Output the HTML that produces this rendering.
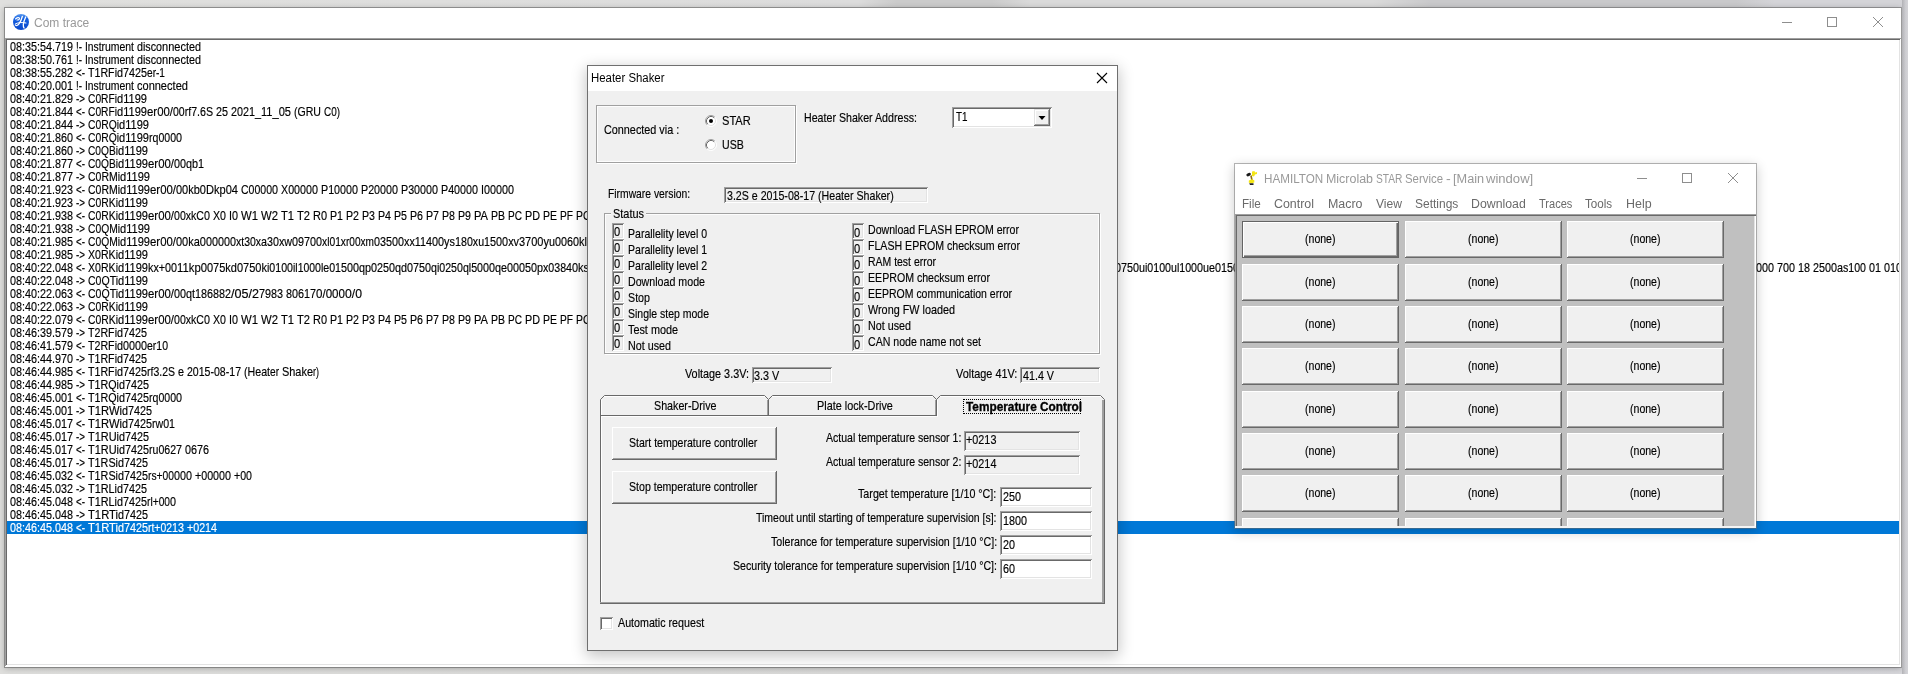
<!DOCTYPE html><html><head><meta charset='utf-8'><title>Com trace</title><style>html,body{margin:0;padding:0}body{width:1908px;height:674px;overflow:hidden;position:relative;background:linear-gradient(90deg,#dededc,#d9d9d8 45%,#d2d2d5 80%,#d6d6da);font-family:"Liberation Sans",sans-serif}
#root{position:absolute;left:0;top:0;width:1908px;height:674px;overflow:hidden;will-change:transform}
.a{position:absolute;box-sizing:border-box}
.t{position:absolute;white-space:pre;transform-origin:0 0;font-family:"Liberation Sans",sans-serif;-webkit-text-stroke:0.17px currentColor}</style></head><body><div id='root'><div class='a ' style='left:0px;top:0px;width:1908px;height:7px;background:linear-gradient(90deg,#e0e0de 0,#dcdcdc 45%,#cbcbcb 47%,#cbcbcb 52%,#dadada 54%,#dadada 72%,#c9c9cb 75%,#c9c9cb 91%,#d4d4d8 93%)'></div><div class='a ' style='left:5px;top:8px;width:1896px;height:659px;background:#fff;border:0;box-shadow:0 0 0 1px rgba(100,100,100,.6),0 1px 6px 0 rgba(0,0,0,.3)'></div><svg class=a style="left:13px;top:14px" width="16" height="16" viewBox="0 0 16 16"><defs><linearGradient id="cg" x1="0" y1="0" x2="0" y2="1"><stop offset="0" stop-color="#5b9bf0"/><stop offset=".3" stop-color="#1560e0"/><stop offset="1" stop-color="#0a48cc"/></linearGradient></defs><circle cx="8" cy="8" r="8" fill="url(#cg)"/><g stroke="#fff" fill="none" stroke-linecap="round"><path d="M2.500 5c1.500-1.500 3.500-1.800 4-.8s-1 2-2.500 1.800" stroke-width="1.100"/><path d="M9.300 2.500C8.500 5.500 7.500 8 6 9.800S3 12 2.300 11" stroke-width="1.300"/><path d="M12.700 3c-1.200 2.500-2.300 5-2.400 7.500s.5 3 .8 3.500" stroke-width="1.300"/><path d="M2.500 9.800c2.500-1.200 6-1.800 10.500-.8" stroke-width="1"/></g></svg><span class=t style='left:34.2px;top:16.84px;font-size:12px;line-height:12px;color:#999;-webkit-text-stroke:0;transform:scaleX(0.9989);'>Com trace</span><svg class=a style="left:1776px;top:12px" width="116" height="20" viewBox="0 0 116 20"><g stroke="#8e8e8e" stroke-width="1" fill="none"><path d="M6 10.500h10"/><rect x="51.500" y="5.500" width="9" height="9"/><path d="M97 5l10 10M107 5l-10 10"/></g></svg><div class='a ' style='left:5px;top:38px;width:1896px;height:628px;background:#fff;box-shadow:inset 1px 1px 0 #a0a0a0,inset -1px -1px 0 #fff,inset 2px 2px 0 #696969,inset -2px -2px 0 #e3e3e3'></div><div class='a ' style='left:7px;top:521px;width:1892px;height:13px;background:#0078d7'></div><span class=t style='left:9.5px;top:40.00px;font-size:13px;line-height:13px;color:#000;transform:scaleX(0.8296);'>08:35</span><span class=t style='left:36.5px;top:40.00px;font-size:13px;line-height:13px;color:#000;transform:scaleX(0.8298);'>:54.7</span><span class=t style='left:60.5px;top:40.00px;font-size:13px;line-height:13px;color:#000;transform:scaleX(0.8294);'>19</span><span class=t style='left:75.5px;top:40.00px;font-size:13px;line-height:13px;color:#000;transform:scaleX(0.7544);'>!-</span><span class=t style='left:84.5px;top:40.00px;font-size:13px;line-height:13px;color:#000;transform:scaleX(0.7906);'>Instr</span><span class=t style='left:104.5px;top:40.00px;font-size:13px;line-height:13px;color:#000;transform:scaleX(0.8024);'>ument</span><span class=t style='left:136.5px;top:40.00px;font-size:13px;line-height:13px;color:#000;transform:scaleX(0.8235);'>disco</span><span class=t style='left:161.5px;top:40.00px;font-size:13px;line-height:13px;color:#000;transform:scaleX(0.8487);'>nnect</span><span class=t style='left:188.5px;top:40.00px;font-size:13px;line-height:13px;color:#000;transform:scaleX(0.8294);'>ed</span><span class=t style='left:9.5px;top:53.00px;font-size:13px;line-height:13px;color:#000;transform:scaleX(0.8296);'>08:38</span><span class=t style='left:36.5px;top:53.00px;font-size:13px;line-height:13px;color:#000;transform:scaleX(0.8298);'>:50.7</span><span class=t style='left:60.5px;top:53.00px;font-size:13px;line-height:13px;color:#000;transform:scaleX(0.8294);'>61</span><span class=t style='left:75.5px;top:53.00px;font-size:13px;line-height:13px;color:#000;transform:scaleX(0.7544);'>!-</span><span class=t style='left:84.5px;top:53.00px;font-size:13px;line-height:13px;color:#000;transform:scaleX(0.7906);'>Instr</span><span class=t style='left:104.5px;top:53.00px;font-size:13px;line-height:13px;color:#000;transform:scaleX(0.8024);'>ument</span><span class=t style='left:136.5px;top:53.00px;font-size:13px;line-height:13px;color:#000;transform:scaleX(0.8235);'>disco</span><span class=t style='left:161.5px;top:53.00px;font-size:13px;line-height:13px;color:#000;transform:scaleX(0.8487);'>nnect</span><span class=t style='left:188.5px;top:53.00px;font-size:13px;line-height:13px;color:#000;transform:scaleX(0.8294);'>ed</span><span class=t style='left:9.5px;top:66.00px;font-size:13px;line-height:13px;color:#000;transform:scaleX(0.8296);'>08:38</span><span class=t style='left:36.5px;top:66.00px;font-size:13px;line-height:13px;color:#000;transform:scaleX(0.8298);'>:55.2</span><span class=t style='left:60.5px;top:66.00px;font-size:13px;line-height:13px;color:#000;transform:scaleX(0.8294);'>82</span><span class=t style='left:75.5px;top:66.00px;font-size:13px;line-height:13px;color:#000;transform:scaleX(0.7549);'>&lt;-</span><span class=t style='left:87.5px;top:66.00px;font-size:13px;line-height:13px;color:#000;transform:scaleX(0.8194);'>T1RFi</span><span class=t style='left:116.5px;top:66.00px;font-size:13px;line-height:13px;color:#000;transform:scaleX(0.8297);'>d7425</span><span class=t style='left:146.5px;top:66.00px;font-size:13px;line-height:13px;color:#000;transform:scaleX(0.7784);'>er-1</span><span class=t style='left:9.5px;top:79.00px;font-size:13px;line-height:13px;color:#000;transform:scaleX(0.8296);'>08:40</span><span class=t style='left:36.5px;top:79.00px;font-size:13px;line-height:13px;color:#000;transform:scaleX(0.8298);'>:20.0</span><span class=t style='left:60.5px;top:79.00px;font-size:13px;line-height:13px;color:#000;transform:scaleX(0.8294);'>01</span><span class=t style='left:75.5px;top:79.00px;font-size:13px;line-height:13px;color:#000;transform:scaleX(0.7544);'>!-</span><span class=t style='left:84.5px;top:79.00px;font-size:13px;line-height:13px;color:#000;transform:scaleX(0.7906);'>Instr</span><span class=t style='left:104.5px;top:79.00px;font-size:13px;line-height:13px;color:#000;transform:scaleX(0.8024);'>ument</span><span class=t style='left:136.5px;top:79.00px;font-size:13px;line-height:13px;color:#000;transform:scaleX(0.8469);'>conne</span><span class=t style='left:166.5px;top:79.00px;font-size:13px;line-height:13px;color:#000;transform:scaleX(0.8544);'>cted</span><span class=t style='left:9.5px;top:92.00px;font-size:13px;line-height:13px;color:#000;transform:scaleX(0.8296);'>08:40</span><span class=t style='left:36.5px;top:92.00px;font-size:13px;line-height:13px;color:#000;transform:scaleX(0.8298);'>:21.8</span><span class=t style='left:60.5px;top:92.00px;font-size:13px;line-height:13px;color:#000;transform:scaleX(0.8294);'>29</span><span class=t style='left:75.5px;top:92.00px;font-size:13px;line-height:13px;color:#000;transform:scaleX(0.7549);'>-&gt;</span><span class=t style='left:87.5px;top:92.00px;font-size:13px;line-height:13px;color:#000;transform:scaleX(0.7871);'>C0RFi</span><span class=t style='left:116.5px;top:92.00px;font-size:13px;line-height:13px;color:#000;transform:scaleX(0.8526);'>d1199</span><span class=t style='left:9.5px;top:105.00px;font-size:13px;line-height:13px;color:#000;transform:scaleX(0.8296);'>08:40</span><span class=t style='left:36.5px;top:105.00px;font-size:13px;line-height:13px;color:#000;transform:scaleX(0.8298);'>:21.8</span><span class=t style='left:60.5px;top:105.00px;font-size:13px;line-height:13px;color:#000;transform:scaleX(0.8294);'>44</span><span class=t style='left:75.5px;top:105.00px;font-size:13px;line-height:13px;color:#000;transform:scaleX(0.7549);'>&lt;-</span><span class=t style='left:87.5px;top:105.00px;font-size:13px;line-height:13px;color:#000;transform:scaleX(0.7871);'>C0RFi</span><span class=t style='left:116.5px;top:105.00px;font-size:13px;line-height:13px;color:#000;transform:scaleX(0.8526);'>d1199</span><span class=t style='left:146.5px;top:105.00px;font-size:13px;line-height:13px;color:#000;transform:scaleX(0.8772);'>er00/</span><span class=t style='left:172.5px;top:105.00px;font-size:13px;line-height:13px;color:#000;transform:scaleX(0.8097);'>00rf7</span><span class=t style='left:196.5px;top:105.00px;font-size:13px;line-height:13px;color:#000;transform:scaleX(0.8199);'>.6S</span><span class=t style='left:215.5px;top:105.00px;font-size:13px;line-height:13px;color:#000;transform:scaleX(0.8294);'>25</span><span class=t style='left:230.5px;top:105.00px;font-size:13px;line-height:13px;color:#000;transform:scaleX(0.8297);'>2021_</span><span class=t style='left:260.5px;top:105.00px;font-size:13px;line-height:13px;color:#000;transform:scaleX(0.8526);'>11_05</span><span class=t style='left:293.5px;top:105.00px;font-size:13px;line-height:13px;color:#000;transform:scaleX(0.8128);'>(GRU</span><span class=t style='left:323.5px;top:105.00px;font-size:13px;line-height:13px;color:#000;transform:scaleX(0.7636);'>C0)</span><span class=t style='left:9.5px;top:118.00px;font-size:13px;line-height:13px;color:#000;transform:scaleX(0.8296);'>08:40</span><span class=t style='left:36.5px;top:118.00px;font-size:13px;line-height:13px;color:#000;transform:scaleX(0.8298);'>:21.8</span><span class=t style='left:60.5px;top:118.00px;font-size:13px;line-height:13px;color:#000;transform:scaleX(0.8294);'>44</span><span class=t style='left:75.5px;top:118.00px;font-size:13px;line-height:13px;color:#000;transform:scaleX(0.7549);'>-&gt;</span><span class=t style='left:87.5px;top:118.00px;font-size:13px;line-height:13px;color:#000;transform:scaleX(0.7946);'>C0RQi</span><span class=t style='left:118.5px;top:118.00px;font-size:13px;line-height:13px;color:#000;transform:scaleX(0.8526);'>d1199</span><span class=t style='left:9.5px;top:131.00px;font-size:13px;line-height:13px;color:#000;transform:scaleX(0.8296);'>08:40</span><span class=t style='left:36.5px;top:131.00px;font-size:13px;line-height:13px;color:#000;transform:scaleX(0.8298);'>:21.8</span><span class=t style='left:60.5px;top:131.00px;font-size:13px;line-height:13px;color:#000;transform:scaleX(0.8294);'>60</span><span class=t style='left:75.5px;top:131.00px;font-size:13px;line-height:13px;color:#000;transform:scaleX(0.7549);'>&lt;-</span><span class=t style='left:87.5px;top:131.00px;font-size:13px;line-height:13px;color:#000;transform:scaleX(0.7946);'>C0RQi</span><span class=t style='left:118.5px;top:131.00px;font-size:13px;line-height:13px;color:#000;transform:scaleX(0.8526);'>d1199</span><span class=t style='left:148.5px;top:131.00px;font-size:13px;line-height:13px;color:#000;transform:scaleX(0.8120);'>rq000</span><span class=t style='left:175.5px;top:131.00px;font-size:13px;line-height:13px;color:#000;transform:scaleX(0.8294);'>0</span><span class=t style='left:9.5px;top:144.00px;font-size:13px;line-height:13px;color:#000;transform:scaleX(0.8296);'>08:40</span><span class=t style='left:36.5px;top:144.00px;font-size:13px;line-height:13px;color:#000;transform:scaleX(0.8298);'>:21.8</span><span class=t style='left:60.5px;top:144.00px;font-size:13px;line-height:13px;color:#000;transform:scaleX(0.8294);'>60</span><span class=t style='left:75.5px;top:144.00px;font-size:13px;line-height:13px;color:#000;transform:scaleX(0.7549);'>-&gt;</span><span class=t style='left:87.5px;top:144.00px;font-size:13px;line-height:13px;color:#000;transform:scaleX(0.7834);'>C0QBi</span><span class=t style='left:117.5px;top:144.00px;font-size:13px;line-height:13px;color:#000;transform:scaleX(0.8526);'>d1199</span><span class=t style='left:9.5px;top:157.00px;font-size:13px;line-height:13px;color:#000;transform:scaleX(0.8296);'>08:40</span><span class=t style='left:36.5px;top:157.00px;font-size:13px;line-height:13px;color:#000;transform:scaleX(0.8298);'>:21.8</span><span class=t style='left:60.5px;top:157.00px;font-size:13px;line-height:13px;color:#000;transform:scaleX(0.8294);'>77</span><span class=t style='left:75.5px;top:157.00px;font-size:13px;line-height:13px;color:#000;transform:scaleX(0.7549);'>&lt;-</span><span class=t style='left:87.5px;top:157.00px;font-size:13px;line-height:13px;color:#000;transform:scaleX(0.7834);'>C0QBi</span><span class=t style='left:117.5px;top:157.00px;font-size:13px;line-height:13px;color:#000;transform:scaleX(0.8526);'>d1199</span><span class=t style='left:147.5px;top:157.00px;font-size:13px;line-height:13px;color:#000;transform:scaleX(0.8772);'>er00/</span><span class=t style='left:173.5px;top:157.00px;font-size:13px;line-height:13px;color:#000;transform:scaleX(0.8297);'>00qb1</span><span class=t style='left:9.5px;top:170.00px;font-size:13px;line-height:13px;color:#000;transform:scaleX(0.8296);'>08:40</span><span class=t style='left:36.5px;top:170.00px;font-size:13px;line-height:13px;color:#000;transform:scaleX(0.8298);'>:21.8</span><span class=t style='left:60.5px;top:170.00px;font-size:13px;line-height:13px;color:#000;transform:scaleX(0.8294);'>77</span><span class=t style='left:75.5px;top:170.00px;font-size:13px;line-height:13px;color:#000;transform:scaleX(0.7549);'>-&gt;</span><span class=t style='left:87.5px;top:170.00px;font-size:13px;line-height:13px;color:#000;transform:scaleX(0.8053);'>C0RMi</span><span class=t style='left:119.5px;top:170.00px;font-size:13px;line-height:13px;color:#000;transform:scaleX(0.8526);'>d1199</span><span class=t style='left:9.5px;top:183.00px;font-size:13px;line-height:13px;color:#000;transform:scaleX(0.8296);'>08:40</span><span class=t style='left:36.5px;top:183.00px;font-size:13px;line-height:13px;color:#000;transform:scaleX(0.8298);'>:21.9</span><span class=t style='left:60.5px;top:183.00px;font-size:13px;line-height:13px;color:#000;transform:scaleX(0.8294);'>23</span><span class=t style='left:75.5px;top:183.00px;font-size:13px;line-height:13px;color:#000;transform:scaleX(0.7549);'>&lt;-</span><span class=t style='left:87.5px;top:183.00px;font-size:13px;line-height:13px;color:#000;transform:scaleX(0.8053);'>C0RMi</span><span class=t style='left:119.5px;top:183.00px;font-size:13px;line-height:13px;color:#000;transform:scaleX(0.8526);'>d1199</span><span class=t style='left:149.5px;top:183.00px;font-size:13px;line-height:13px;color:#000;transform:scaleX(0.8772);'>er00/</span><span class=t style='left:175.5px;top:183.00px;font-size:13px;line-height:13px;color:#000;transform:scaleX(0.8469);'>00kb0</span><span class=t style='left:205.5px;top:183.00px;font-size:13px;line-height:13px;color:#000;transform:scaleX(0.8516);'>Dkp04</span><span class=t style='left:240.5px;top:183.00px;font-size:13px;line-height:13px;color:#000;transform:scaleX(0.8091);'>C0000</span><span class=t style='left:271.5px;top:183.00px;font-size:13px;line-height:13px;color:#000;transform:scaleX(0.8294);'>0</span><span class=t style='left:280.5px;top:183.00px;font-size:13px;line-height:13px;color:#000;transform:scaleX(0.8246);'>X0000</span><span class=t style='left:311.5px;top:183.00px;font-size:13px;line-height:13px;color:#000;transform:scaleX(0.8294);'>0</span><span class=t style='left:320.5px;top:183.00px;font-size:13px;line-height:13px;color:#000;transform:scaleX(0.8246);'>P1000</span><span class=t style='left:351.5px;top:183.00px;font-size:13px;line-height:13px;color:#000;transform:scaleX(0.8294);'>0</span><span class=t style='left:360.5px;top:183.00px;font-size:13px;line-height:13px;color:#000;transform:scaleX(0.8246);'>P2000</span><span class=t style='left:391.5px;top:183.00px;font-size:13px;line-height:13px;color:#000;transform:scaleX(0.8294);'>0</span><span class=t style='left:400.5px;top:183.00px;font-size:13px;line-height:13px;color:#000;transform:scaleX(0.8246);'>P3000</span><span class=t style='left:431.5px;top:183.00px;font-size:13px;line-height:13px;color:#000;transform:scaleX(0.8294);'>0</span><span class=t style='left:440.5px;top:183.00px;font-size:13px;line-height:13px;color:#000;transform:scaleX(0.8246);'>P4000</span><span class=t style='left:471.5px;top:183.00px;font-size:13px;line-height:13px;color:#000;transform:scaleX(0.8294);'>0</span><span class=t style='left:480.5px;top:183.00px;font-size:13px;line-height:13px;color:#000;transform:scaleX(0.8296);'>I0000</span><span class=t style='left:507.5px;top:183.00px;font-size:13px;line-height:13px;color:#000;transform:scaleX(0.8294);'>0</span><span class=t style='left:9.5px;top:196.00px;font-size:13px;line-height:13px;color:#000;transform:scaleX(0.8296);'>08:40</span><span class=t style='left:36.5px;top:196.00px;font-size:13px;line-height:13px;color:#000;transform:scaleX(0.8298);'>:21.9</span><span class=t style='left:60.5px;top:196.00px;font-size:13px;line-height:13px;color:#000;transform:scaleX(0.8294);'>23</span><span class=t style='left:75.5px;top:196.00px;font-size:13px;line-height:13px;color:#000;transform:scaleX(0.7549);'>-&gt;</span><span class=t style='left:87.5px;top:196.00px;font-size:13px;line-height:13px;color:#000;transform:scaleX(0.7983);'>C0RKi</span><span class=t style='left:117.5px;top:196.00px;font-size:13px;line-height:13px;color:#000;transform:scaleX(0.8526);'>d1199</span><span class=t style='left:9.5px;top:209.00px;font-size:13px;line-height:13px;color:#000;transform:scaleX(0.8296);'>08:40</span><span class=t style='left:36.5px;top:209.00px;font-size:13px;line-height:13px;color:#000;transform:scaleX(0.8298);'>:21.9</span><span class=t style='left:60.5px;top:209.00px;font-size:13px;line-height:13px;color:#000;transform:scaleX(0.8294);'>38</span><span class=t style='left:75.5px;top:209.00px;font-size:13px;line-height:13px;color:#000;transform:scaleX(0.7549);'>&lt;-</span><span class=t style='left:87.5px;top:209.00px;font-size:13px;line-height:13px;color:#000;transform:scaleX(0.7983);'>C0RKi</span><span class=t style='left:117.5px;top:209.00px;font-size:13px;line-height:13px;color:#000;transform:scaleX(0.8526);'>d1199</span><span class=t style='left:147.5px;top:209.00px;font-size:13px;line-height:13px;color:#000;transform:scaleX(0.8772);'>er00/</span><span class=t style='left:173.5px;top:209.00px;font-size:13px;line-height:13px;color:#000;transform:scaleX(0.8139);'>00xkC</span><span class=t style='left:203.5px;top:209.00px;font-size:13px;line-height:13px;color:#000;transform:scaleX(0.8294);'>0</span><span class=t style='left:212.5px;top:209.00px;font-size:13px;line-height:13px;color:#000;transform:scaleX(0.8173);'>X0</span><span class=t style='left:228.5px;top:209.00px;font-size:13px;line-height:13px;color:#000;transform:scaleX(0.8300);'>I0</span><span class=t style='left:240.5px;top:209.00px;font-size:13px;line-height:13px;color:#000;transform:scaleX(0.8718);'>W1</span><span class=t style='left:260.5px;top:209.00px;font-size:13px;line-height:13px;color:#000;transform:scaleX(0.8718);'>W2</span><span class=t style='left:280.5px;top:209.00px;font-size:13px;line-height:13px;color:#000;transform:scaleX(0.8568);'>T1</span><span class=t style='left:296.5px;top:209.00px;font-size:13px;line-height:13px;color:#000;transform:scaleX(0.8568);'>T2</span><span class=t style='left:312.5px;top:209.00px;font-size:13px;line-height:13px;color:#000;transform:scaleX(0.8421);'>R0</span><span class=t style='left:329.5px;top:209.00px;font-size:13px;line-height:13px;color:#000;transform:scaleX(0.8173);'>P1</span><span class=t style='left:345.5px;top:209.00px;font-size:13px;line-height:13px;color:#000;transform:scaleX(0.8173);'>P2</span><span class=t style='left:361.5px;top:209.00px;font-size:13px;line-height:13px;color:#000;transform:scaleX(0.8173);'>P3</span><span class=t style='left:377.5px;top:209.00px;font-size:13px;line-height:13px;color:#000;transform:scaleX(0.8173);'>P4</span><span class=t style='left:393.5px;top:209.00px;font-size:13px;line-height:13px;color:#000;transform:scaleX(0.8173);'>P5</span><span class=t style='left:409.5px;top:209.00px;font-size:13px;line-height:13px;color:#000;transform:scaleX(0.8173);'>P6</span><span class=t style='left:425.5px;top:209.00px;font-size:13px;line-height:13px;color:#000;transform:scaleX(0.8173);'>P7</span><span class=t style='left:441.5px;top:209.00px;font-size:13px;line-height:13px;color:#000;transform:scaleX(0.8173);'>P8</span><span class=t style='left:457.5px;top:209.00px;font-size:13px;line-height:13px;color:#000;transform:scaleX(0.8173);'>P9</span><span class=t style='left:473.5px;top:209.00px;font-size:13px;line-height:13px;color:#000;transform:scaleX(0.8541);'>PA</span><span class=t style='left:490.5px;top:209.00px;font-size:13px;line-height:13px;color:#000;transform:scaleX(0.8072);'>PB</span><span class=t style='left:507.5px;top:209.00px;font-size:13px;line-height:13px;color:#000;transform:scaleX(0.7751);'>PC</span><span class=t style='left:524.5px;top:209.00px;font-size:13px;line-height:13px;color:#000;transform:scaleX(0.8304);'>PD</span><span class=t style='left:542.5px;top:209.00px;font-size:13px;line-height:13px;color:#000;transform:scaleX(0.8072);'>PE</span><span class=t style='left:559.5px;top:209.00px;font-size:13px;line-height:13px;color:#000;transform:scaleX(0.7820);'>PF</span><span class=t style='left:575.5px;top:209.00px;font-size:13px;line-height:13px;color:#000;transform:scaleX(0.7980);'>PG</span><span class=t style='left:9.5px;top:222.00px;font-size:13px;line-height:13px;color:#000;transform:scaleX(0.8296);'>08:40</span><span class=t style='left:36.5px;top:222.00px;font-size:13px;line-height:13px;color:#000;transform:scaleX(0.8298);'>:21.9</span><span class=t style='left:60.5px;top:222.00px;font-size:13px;line-height:13px;color:#000;transform:scaleX(0.8294);'>38</span><span class=t style='left:75.5px;top:222.00px;font-size:13px;line-height:13px;color:#000;transform:scaleX(0.7549);'>-&gt;</span><span class=t style='left:87.5px;top:222.00px;font-size:13px;line-height:13px;color:#000;transform:scaleX(0.7910);'>C0QMi</span><span class=t style='left:119.5px;top:222.00px;font-size:13px;line-height:13px;color:#000;transform:scaleX(0.8526);'>d1199</span><span class=t style='left:9.5px;top:235.00px;font-size:13px;line-height:13px;color:#000;transform:scaleX(0.8296);'>08:40</span><span class=t style='left:36.5px;top:235.00px;font-size:13px;line-height:13px;color:#000;transform:scaleX(0.8298);'>:21.9</span><span class=t style='left:60.5px;top:235.00px;font-size:13px;line-height:13px;color:#000;transform:scaleX(0.8294);'>85</span><span class=t style='left:75.5px;top:235.00px;font-size:13px;line-height:13px;color:#000;transform:scaleX(0.7549);'>&lt;-</span><span class=t style='left:87.5px;top:235.00px;font-size:13px;line-height:13px;color:#000;transform:scaleX(0.7910);'>C0QMi</span><span class=t style='left:119.5px;top:235.00px;font-size:13px;line-height:13px;color:#000;transform:scaleX(0.8526);'>d1199</span><span class=t style='left:149.5px;top:235.00px;font-size:13px;line-height:13px;color:#000;transform:scaleX(0.8772);'>er00/</span><span class=t style='left:175.5px;top:235.00px;font-size:13px;line-height:13px;color:#000;transform:scaleX(0.8469);'>00ka0</span><span class=t style='left:205.5px;top:235.00px;font-size:13px;line-height:13px;color:#000;transform:scaleX(0.8297);'>00000</span><span class=t style='left:235.5px;top:235.00px;font-size:13px;line-height:13px;color:#000;transform:scaleX(0.8044);'>xt30x</span><span class=t style='left:260.5px;top:235.00px;font-size:13px;line-height:13px;color:#000;transform:scaleX(0.8249);'>a30xw</span><span class=t style='left:291.5px;top:235.00px;font-size:13px;line-height:13px;color:#000;transform:scaleX(0.8297);'>09700</span><span class=t style='left:321.5px;top:235.00px;font-size:13px;line-height:13px;color:#000;transform:scaleX(0.7905);'>xl01x</span><span class=t style='left:345.5px;top:235.00px;font-size:13px;line-height:13px;color:#000;transform:scaleX(0.7751);'>r00xm</span><span class=t style='left:373.5px;top:235.00px;font-size:13px;line-height:13px;color:#000;transform:scaleX(0.8297);'>03500</span><span class=t style='left:403.5px;top:235.00px;font-size:13px;line-height:13px;color:#000;transform:scaleX(0.8300);'>xx114</span><span class=t style='left:431.5px;top:235.00px;font-size:13px;line-height:13px;color:#000;transform:scaleX(0.8357);'>00ys1</span><span class=t style='left:460.5px;top:235.00px;font-size:13px;line-height:13px;color:#000;transform:scaleX(0.8187);'>80xu1</span><span class=t style='left:489.5px;top:235.00px;font-size:13px;line-height:13px;color:#000;transform:scaleX(0.8357);'>500xv</span><span class=t style='left:518.5px;top:235.00px;font-size:13px;line-height:13px;color:#000;transform:scaleX(0.8469);'>3700y</span><span class=t style='left:548.5px;top:235.00px;font-size:13px;line-height:13px;color:#000;transform:scaleX(0.8297);'>u0060</span><span class=t style='left:578.5px;top:235.00px;font-size:13px;line-height:13px;color:#000;transform:scaleX(0.8421);'>kl3</span><span class=t style='left:9.5px;top:248.00px;font-size:13px;line-height:13px;color:#000;transform:scaleX(0.8296);'>08:40</span><span class=t style='left:36.5px;top:248.00px;font-size:13px;line-height:13px;color:#000;transform:scaleX(0.8298);'>:21.9</span><span class=t style='left:60.5px;top:248.00px;font-size:13px;line-height:13px;color:#000;transform:scaleX(0.8294);'>85</span><span class=t style='left:75.5px;top:248.00px;font-size:13px;line-height:13px;color:#000;transform:scaleX(0.7549);'>-&gt;</span><span class=t style='left:87.5px;top:248.00px;font-size:13px;line-height:13px;color:#000;transform:scaleX(0.8139);'>X0RKi</span><span class=t style='left:117.5px;top:248.00px;font-size:13px;line-height:13px;color:#000;transform:scaleX(0.8526);'>d1199</span><span class=t style='left:9.5px;top:261.00px;font-size:13px;line-height:13px;color:#000;transform:scaleX(0.8296);'>08:40</span><span class=t style='left:36.5px;top:261.00px;font-size:13px;line-height:13px;color:#000;transform:scaleX(0.8298);'>:22.0</span><span class=t style='left:60.5px;top:261.00px;font-size:13px;line-height:13px;color:#000;transform:scaleX(0.8294);'>48</span><span class=t style='left:75.5px;top:261.00px;font-size:13px;line-height:13px;color:#000;transform:scaleX(0.7549);'>&lt;-</span><span class=t style='left:87.5px;top:261.00px;font-size:13px;line-height:13px;color:#000;transform:scaleX(0.8139);'>X0RKi</span><span class=t style='left:117.5px;top:261.00px;font-size:13px;line-height:13px;color:#000;transform:scaleX(0.8526);'>d1199</span><span class=t style='left:147.5px;top:261.00px;font-size:13px;line-height:13px;color:#000;transform:scaleX(0.8271);'>kx+00</span><span class=t style='left:176.5px;top:261.00px;font-size:13px;line-height:13px;color:#000;transform:scaleX(0.8704);'>11kp0</span><span class=t style='left:206.5px;top:261.00px;font-size:13px;line-height:13px;color:#000;transform:scaleX(0.8469);'>075kd</span><span class=t style='left:236.5px;top:261.00px;font-size:13px;line-height:13px;color:#000;transform:scaleX(0.8469);'>0750k</span><span class=t style='left:266.5px;top:261.00px;font-size:13px;line-height:13px;color:#000;transform:scaleX(0.8173);'>i0100</span><span class=t style='left:292.5px;top:261.00px;font-size:13px;line-height:13px;color:#000;transform:scaleX(0.8009);'>il100</span><span class=t style='left:314.5px;top:261.00px;font-size:13px;line-height:13px;color:#000;transform:scaleX(0.8173);'>0le01</span><span class=t style='left:340.5px;top:261.00px;font-size:13px;line-height:13px;color:#000;transform:scaleX(0.8297);'>500qp</span><span class=t style='left:370.5px;top:261.00px;font-size:13px;line-height:13px;color:#000;transform:scaleX(0.8297);'>0250q</span><span class=t style='left:400.5px;top:261.00px;font-size:13px;line-height:13px;color:#000;transform:scaleX(0.8297);'>d0750</span><span class=t style='left:430.5px;top:261.00px;font-size:13px;line-height:13px;color:#000;transform:scaleX(0.8173);'>qi025</span><span class=t style='left:456.5px;top:261.00px;font-size:13px;line-height:13px;color:#000;transform:scaleX(0.8173);'>0ql50</span><span class=t style='left:482.5px;top:261.00px;font-size:13px;line-height:13px;color:#000;transform:scaleX(0.8297);'>00qe0</span><span class=t style='left:512.5px;top:261.00px;font-size:13px;line-height:13px;color:#000;transform:scaleX(0.8297);'>0050p</span><span class=t style='left:542.5px;top:261.00px;font-size:13px;line-height:13px;color:#000;transform:scaleX(0.8187);'>x0384</span><span class=t style='left:571.5px;top:261.00px;font-size:13px;line-height:13px;color:#000;transform:scaleX(0.8402);'>0ks</span><span class=t style='left:9.5px;top:274.00px;font-size:13px;line-height:13px;color:#000;transform:scaleX(0.8296);'>08:40</span><span class=t style='left:36.5px;top:274.00px;font-size:13px;line-height:13px;color:#000;transform:scaleX(0.8298);'>:22.0</span><span class=t style='left:60.5px;top:274.00px;font-size:13px;line-height:13px;color:#000;transform:scaleX(0.8294);'>48</span><span class=t style='left:75.5px;top:274.00px;font-size:13px;line-height:13px;color:#000;transform:scaleX(0.7549);'>-&gt;</span><span class=t style='left:87.5px;top:274.00px;font-size:13px;line-height:13px;color:#000;transform:scaleX(0.8091);'>C0QTi</span><span class=t style='left:117.5px;top:274.00px;font-size:13px;line-height:13px;color:#000;transform:scaleX(0.8526);'>d1199</span><span class=t style='left:9.5px;top:287.00px;font-size:13px;line-height:13px;color:#000;transform:scaleX(0.8296);'>08:40</span><span class=t style='left:36.5px;top:287.00px;font-size:13px;line-height:13px;color:#000;transform:scaleX(0.8298);'>:22.0</span><span class=t style='left:60.5px;top:287.00px;font-size:13px;line-height:13px;color:#000;transform:scaleX(0.8294);'>63</span><span class=t style='left:75.5px;top:287.00px;font-size:13px;line-height:13px;color:#000;transform:scaleX(0.7549);'>&lt;-</span><span class=t style='left:87.5px;top:287.00px;font-size:13px;line-height:13px;color:#000;transform:scaleX(0.8091);'>C0QTi</span><span class=t style='left:117.5px;top:287.00px;font-size:13px;line-height:13px;color:#000;transform:scaleX(0.8526);'>d1199</span><span class=t style='left:147.5px;top:287.00px;font-size:13px;line-height:13px;color:#000;transform:scaleX(0.8772);'>er00/</span><span class=t style='left:173.5px;top:287.00px;font-size:13px;line-height:13px;color:#000;transform:scaleX(0.8296);'>00qt1</span><span class=t style='left:200.5px;top:287.00px;font-size:13px;line-height:13px;color:#000;transform:scaleX(0.8297);'>86882</span><span class=t style='left:230.5px;top:287.00px;font-size:13px;line-height:13px;color:#000;transform:scaleX(0.9681);'>/05/2</span><span class=t style='left:258.5px;top:287.00px;font-size:13px;line-height:13px;color:#000;transform:scaleX(0.8298);'>7983</span><span class=t style='left:285.5px;top:287.00px;font-size:13px;line-height:13px;color:#000;transform:scaleX(0.8297);'>80617</span><span class=t style='left:315.5px;top:287.00px;font-size:13px;line-height:13px;color:#000;transform:scaleX(0.8910);'>0/000</span><span class=t style='left:344.5px;top:287.00px;font-size:13px;line-height:13px;color:#000;transform:scaleX(0.9404);'>0/0</span><span class=t style='left:9.5px;top:300.00px;font-size:13px;line-height:13px;color:#000;transform:scaleX(0.8296);'>08:40</span><span class=t style='left:36.5px;top:300.00px;font-size:13px;line-height:13px;color:#000;transform:scaleX(0.8298);'>:22.0</span><span class=t style='left:60.5px;top:300.00px;font-size:13px;line-height:13px;color:#000;transform:scaleX(0.8294);'>63</span><span class=t style='left:75.5px;top:300.00px;font-size:13px;line-height:13px;color:#000;transform:scaleX(0.7549);'>-&gt;</span><span class=t style='left:87.5px;top:300.00px;font-size:13px;line-height:13px;color:#000;transform:scaleX(0.7983);'>C0RKi</span><span class=t style='left:117.5px;top:300.00px;font-size:13px;line-height:13px;color:#000;transform:scaleX(0.8526);'>d1199</span><span class=t style='left:9.5px;top:313.00px;font-size:13px;line-height:13px;color:#000;transform:scaleX(0.8296);'>08:40</span><span class=t style='left:36.5px;top:313.00px;font-size:13px;line-height:13px;color:#000;transform:scaleX(0.8298);'>:22.0</span><span class=t style='left:60.5px;top:313.00px;font-size:13px;line-height:13px;color:#000;transform:scaleX(0.8294);'>79</span><span class=t style='left:75.5px;top:313.00px;font-size:13px;line-height:13px;color:#000;transform:scaleX(0.7549);'>&lt;-</span><span class=t style='left:87.5px;top:313.00px;font-size:13px;line-height:13px;color:#000;transform:scaleX(0.7983);'>C0RKi</span><span class=t style='left:117.5px;top:313.00px;font-size:13px;line-height:13px;color:#000;transform:scaleX(0.8526);'>d1199</span><span class=t style='left:147.5px;top:313.00px;font-size:13px;line-height:13px;color:#000;transform:scaleX(0.8772);'>er00/</span><span class=t style='left:173.5px;top:313.00px;font-size:13px;line-height:13px;color:#000;transform:scaleX(0.8139);'>00xkC</span><span class=t style='left:203.5px;top:313.00px;font-size:13px;line-height:13px;color:#000;transform:scaleX(0.8294);'>0</span><span class=t style='left:212.5px;top:313.00px;font-size:13px;line-height:13px;color:#000;transform:scaleX(0.8173);'>X0</span><span class=t style='left:228.5px;top:313.00px;font-size:13px;line-height:13px;color:#000;transform:scaleX(0.8300);'>I0</span><span class=t style='left:240.5px;top:313.00px;font-size:13px;line-height:13px;color:#000;transform:scaleX(0.8718);'>W1</span><span class=t style='left:260.5px;top:313.00px;font-size:13px;line-height:13px;color:#000;transform:scaleX(0.8718);'>W2</span><span class=t style='left:280.5px;top:313.00px;font-size:13px;line-height:13px;color:#000;transform:scaleX(0.8568);'>T1</span><span class=t style='left:296.5px;top:313.00px;font-size:13px;line-height:13px;color:#000;transform:scaleX(0.8568);'>T2</span><span class=t style='left:312.5px;top:313.00px;font-size:13px;line-height:13px;color:#000;transform:scaleX(0.8421);'>R0</span><span class=t style='left:329.5px;top:313.00px;font-size:13px;line-height:13px;color:#000;transform:scaleX(0.8173);'>P1</span><span class=t style='left:345.5px;top:313.00px;font-size:13px;line-height:13px;color:#000;transform:scaleX(0.8173);'>P2</span><span class=t style='left:361.5px;top:313.00px;font-size:13px;line-height:13px;color:#000;transform:scaleX(0.8173);'>P3</span><span class=t style='left:377.5px;top:313.00px;font-size:13px;line-height:13px;color:#000;transform:scaleX(0.8173);'>P4</span><span class=t style='left:393.5px;top:313.00px;font-size:13px;line-height:13px;color:#000;transform:scaleX(0.8173);'>P5</span><span class=t style='left:409.5px;top:313.00px;font-size:13px;line-height:13px;color:#000;transform:scaleX(0.8173);'>P6</span><span class=t style='left:425.5px;top:313.00px;font-size:13px;line-height:13px;color:#000;transform:scaleX(0.8173);'>P7</span><span class=t style='left:441.5px;top:313.00px;font-size:13px;line-height:13px;color:#000;transform:scaleX(0.8173);'>P8</span><span class=t style='left:457.5px;top:313.00px;font-size:13px;line-height:13px;color:#000;transform:scaleX(0.8173);'>P9</span><span class=t style='left:473.5px;top:313.00px;font-size:13px;line-height:13px;color:#000;transform:scaleX(0.8541);'>PA</span><span class=t style='left:490.5px;top:313.00px;font-size:13px;line-height:13px;color:#000;transform:scaleX(0.8072);'>PB</span><span class=t style='left:507.5px;top:313.00px;font-size:13px;line-height:13px;color:#000;transform:scaleX(0.7751);'>PC</span><span class=t style='left:524.5px;top:313.00px;font-size:13px;line-height:13px;color:#000;transform:scaleX(0.8304);'>PD</span><span class=t style='left:542.5px;top:313.00px;font-size:13px;line-height:13px;color:#000;transform:scaleX(0.8072);'>PE</span><span class=t style='left:559.5px;top:313.00px;font-size:13px;line-height:13px;color:#000;transform:scaleX(0.7820);'>PF</span><span class=t style='left:575.5px;top:313.00px;font-size:13px;line-height:13px;color:#000;transform:scaleX(0.7980);'>PG</span><span class=t style='left:9.5px;top:326.00px;font-size:13px;line-height:13px;color:#000;transform:scaleX(0.8296);'>08:46</span><span class=t style='left:36.5px;top:326.00px;font-size:13px;line-height:13px;color:#000;transform:scaleX(0.8298);'>:39.5</span><span class=t style='left:60.5px;top:326.00px;font-size:13px;line-height:13px;color:#000;transform:scaleX(0.8294);'>79</span><span class=t style='left:75.5px;top:326.00px;font-size:13px;line-height:13px;color:#000;transform:scaleX(0.7549);'>-&gt;</span><span class=t style='left:87.5px;top:326.00px;font-size:13px;line-height:13px;color:#000;transform:scaleX(0.8194);'>T2RFi</span><span class=t style='left:116.5px;top:326.00px;font-size:13px;line-height:13px;color:#000;transform:scaleX(0.8297);'>d7425</span><span class=t style='left:9.5px;top:339.00px;font-size:13px;line-height:13px;color:#000;transform:scaleX(0.8296);'>08:46</span><span class=t style='left:36.5px;top:339.00px;font-size:13px;line-height:13px;color:#000;transform:scaleX(0.8298);'>:41.5</span><span class=t style='left:60.5px;top:339.00px;font-size:13px;line-height:13px;color:#000;transform:scaleX(0.8294);'>79</span><span class=t style='left:75.5px;top:339.00px;font-size:13px;line-height:13px;color:#000;transform:scaleX(0.7549);'>&lt;-</span><span class=t style='left:87.5px;top:339.00px;font-size:13px;line-height:13px;color:#000;transform:scaleX(0.8194);'>T2RFi</span><span class=t style='left:116.5px;top:339.00px;font-size:13px;line-height:13px;color:#000;transform:scaleX(0.8297);'>d0000</span><span class=t style='left:146.5px;top:339.00px;font-size:13px;line-height:13px;color:#000;transform:scaleX(0.8067);'>er10</span><span class=t style='left:9.5px;top:352.00px;font-size:13px;line-height:13px;color:#000;transform:scaleX(0.8296);'>08:46</span><span class=t style='left:36.5px;top:352.00px;font-size:13px;line-height:13px;color:#000;transform:scaleX(0.8298);'>:44.9</span><span class=t style='left:60.5px;top:352.00px;font-size:13px;line-height:13px;color:#000;transform:scaleX(0.8294);'>70</span><span class=t style='left:75.5px;top:352.00px;font-size:13px;line-height:13px;color:#000;transform:scaleX(0.7549);'>-&gt;</span><span class=t style='left:87.5px;top:352.00px;font-size:13px;line-height:13px;color:#000;transform:scaleX(0.8194);'>T1RFi</span><span class=t style='left:116.5px;top:352.00px;font-size:13px;line-height:13px;color:#000;transform:scaleX(0.8297);'>d7425</span><span class=t style='left:9.5px;top:365.00px;font-size:13px;line-height:13px;color:#000;transform:scaleX(0.8296);'>08:46</span><span class=t style='left:36.5px;top:365.00px;font-size:13px;line-height:13px;color:#000;transform:scaleX(0.8298);'>:44.9</span><span class=t style='left:60.5px;top:365.00px;font-size:13px;line-height:13px;color:#000;transform:scaleX(0.8294);'>85</span><span class=t style='left:75.5px;top:365.00px;font-size:13px;line-height:13px;color:#000;transform:scaleX(0.7549);'>&lt;-</span><span class=t style='left:87.5px;top:365.00px;font-size:13px;line-height:13px;color:#000;transform:scaleX(0.8194);'>T1RFi</span><span class=t style='left:116.5px;top:365.00px;font-size:13px;line-height:13px;color:#000;transform:scaleX(0.8297);'>d7425</span><span class=t style='left:146.5px;top:365.00px;font-size:13px;line-height:13px;color:#000;transform:scaleX(0.8072);'>rf3.2</span><span class=t style='left:167.5px;top:365.00px;font-size:13px;line-height:13px;color:#000;transform:scaleX(0.8072);'>S</span><span class=t style='left:177.5px;top:365.00px;font-size:13px;line-height:13px;color:#000;transform:scaleX(0.8294);'>e</span><span class=t style='left:186.5px;top:365.00px;font-size:13px;line-height:13px;color:#000;transform:scaleX(0.8120);'>2015-</span><span class=t style='left:213.5px;top:365.00px;font-size:13px;line-height:13px;color:#000;transform:scaleX(0.8120);'>08-17</span><span class=t style='left:243.5px;top:365.00px;font-size:13px;line-height:13px;color:#000;transform:scaleX(0.8177);'>(Heat</span><span class=t style='left:269.5px;top:365.00px;font-size:13px;line-height:13px;color:#000;transform:scaleX(0.7784);'>er</span><span class=t style='left:281.5px;top:365.00px;font-size:13px;line-height:13px;color:#000;transform:scaleX(0.8407);'>Shake</span><span class=t style='left:312.5px;top:365.00px;font-size:13px;line-height:13px;color:#000;transform:scaleX(0.6919);'>r)</span><span class=t style='left:9.5px;top:378.00px;font-size:13px;line-height:13px;color:#000;transform:scaleX(0.8296);'>08:46</span><span class=t style='left:36.5px;top:378.00px;font-size:13px;line-height:13px;color:#000;transform:scaleX(0.8298);'>:44.9</span><span class=t style='left:60.5px;top:378.00px;font-size:13px;line-height:13px;color:#000;transform:scaleX(0.8294);'>85</span><span class=t style='left:75.5px;top:378.00px;font-size:13px;line-height:13px;color:#000;transform:scaleX(0.7549);'>-&gt;</span><span class=t style='left:87.5px;top:378.00px;font-size:13px;line-height:13px;color:#000;transform:scaleX(0.8253);'>T1RQi</span><span class=t style='left:118.5px;top:378.00px;font-size:13px;line-height:13px;color:#000;transform:scaleX(0.8297);'>d7425</span><span class=t style='left:9.5px;top:391.00px;font-size:13px;line-height:13px;color:#000;transform:scaleX(0.8296);'>08:46</span><span class=t style='left:36.5px;top:391.00px;font-size:13px;line-height:13px;color:#000;transform:scaleX(0.8298);'>:45.0</span><span class=t style='left:60.5px;top:391.00px;font-size:13px;line-height:13px;color:#000;transform:scaleX(0.8294);'>01</span><span class=t style='left:75.5px;top:391.00px;font-size:13px;line-height:13px;color:#000;transform:scaleX(0.7549);'>&lt;-</span><span class=t style='left:87.5px;top:391.00px;font-size:13px;line-height:13px;color:#000;transform:scaleX(0.8253);'>T1RQi</span><span class=t style='left:118.5px;top:391.00px;font-size:13px;line-height:13px;color:#000;transform:scaleX(0.8297);'>d7425</span><span class=t style='left:148.5px;top:391.00px;font-size:13px;line-height:13px;color:#000;transform:scaleX(0.8120);'>rq000</span><span class=t style='left:175.5px;top:391.00px;font-size:13px;line-height:13px;color:#000;transform:scaleX(0.8294);'>0</span><span class=t style='left:9.5px;top:404.00px;font-size:13px;line-height:13px;color:#000;transform:scaleX(0.8296);'>08:46</span><span class=t style='left:36.5px;top:404.00px;font-size:13px;line-height:13px;color:#000;transform:scaleX(0.8298);'>:45.0</span><span class=t style='left:60.5px;top:404.00px;font-size:13px;line-height:13px;color:#000;transform:scaleX(0.8294);'>01</span><span class=t style='left:75.5px;top:404.00px;font-size:13px;line-height:13px;color:#000;transform:scaleX(0.7549);'>-&gt;</span><span class=t style='left:87.5px;top:404.00px;font-size:13px;line-height:13px;color:#000;transform:scaleX(0.8611);'>T1RWi</span><span class=t style='left:121.5px;top:404.00px;font-size:13px;line-height:13px;color:#000;transform:scaleX(0.8297);'>d7425</span><span class=t style='left:9.5px;top:417.00px;font-size:13px;line-height:13px;color:#000;transform:scaleX(0.8296);'>08:46</span><span class=t style='left:36.5px;top:417.00px;font-size:13px;line-height:13px;color:#000;transform:scaleX(0.8298);'>:45.0</span><span class=t style='left:60.5px;top:417.00px;font-size:13px;line-height:13px;color:#000;transform:scaleX(0.8294);'>17</span><span class=t style='left:75.5px;top:417.00px;font-size:13px;line-height:13px;color:#000;transform:scaleX(0.7549);'>&lt;-</span><span class=t style='left:87.5px;top:417.00px;font-size:13px;line-height:13px;color:#000;transform:scaleX(0.8611);'>T1RWi</span><span class=t style='left:121.5px;top:417.00px;font-size:13px;line-height:13px;color:#000;transform:scaleX(0.8297);'>d7425</span><span class=t style='left:151.5px;top:417.00px;font-size:13px;line-height:13px;color:#000;transform:scaleX(0.8160);'>rw01</span><span class=t style='left:9.5px;top:430.00px;font-size:13px;line-height:13px;color:#000;transform:scaleX(0.8296);'>08:46</span><span class=t style='left:36.5px;top:430.00px;font-size:13px;line-height:13px;color:#000;transform:scaleX(0.8298);'>:45.0</span><span class=t style='left:60.5px;top:430.00px;font-size:13px;line-height:13px;color:#000;transform:scaleX(0.8294);'>17</span><span class=t style='left:75.5px;top:430.00px;font-size:13px;line-height:13px;color:#000;transform:scaleX(0.7549);'>-&gt;</span><span class=t style='left:87.5px;top:430.00px;font-size:13px;line-height:13px;color:#000;transform:scaleX(0.8414);'>T1RUi</span><span class=t style='left:118.5px;top:430.00px;font-size:13px;line-height:13px;color:#000;transform:scaleX(0.8297);'>d7425</span><span class=t style='left:9.5px;top:443.00px;font-size:13px;line-height:13px;color:#000;transform:scaleX(0.8296);'>08:46</span><span class=t style='left:36.5px;top:443.00px;font-size:13px;line-height:13px;color:#000;transform:scaleX(0.8298);'>:45.0</span><span class=t style='left:60.5px;top:443.00px;font-size:13px;line-height:13px;color:#000;transform:scaleX(0.8294);'>17</span><span class=t style='left:75.5px;top:443.00px;font-size:13px;line-height:13px;color:#000;transform:scaleX(0.7549);'>&lt;-</span><span class=t style='left:87.5px;top:443.00px;font-size:13px;line-height:13px;color:#000;transform:scaleX(0.8414);'>T1RUi</span><span class=t style='left:118.5px;top:443.00px;font-size:13px;line-height:13px;color:#000;transform:scaleX(0.8297);'>d7425</span><span class=t style='left:148.5px;top:443.00px;font-size:13px;line-height:13px;color:#000;transform:scaleX(0.8120);'>ru062</span><span class=t style='left:175.5px;top:443.00px;font-size:13px;line-height:13px;color:#000;transform:scaleX(0.8294);'>7</span><span class=t style='left:184.5px;top:443.00px;font-size:13px;line-height:13px;color:#000;transform:scaleX(0.8298);'>0676</span><span class=t style='left:9.5px;top:456.00px;font-size:13px;line-height:13px;color:#000;transform:scaleX(0.8296);'>08:46</span><span class=t style='left:36.5px;top:456.00px;font-size:13px;line-height:13px;color:#000;transform:scaleX(0.8298);'>:45.0</span><span class=t style='left:60.5px;top:456.00px;font-size:13px;line-height:13px;color:#000;transform:scaleX(0.8294);'>17</span><span class=t style='left:75.5px;top:456.00px;font-size:13px;line-height:13px;color:#000;transform:scaleX(0.7549);'>-&gt;</span><span class=t style='left:87.5px;top:456.00px;font-size:13px;line-height:13px;color:#000;transform:scaleX(0.8304);'>T1RSi</span><span class=t style='left:117.5px;top:456.00px;font-size:13px;line-height:13px;color:#000;transform:scaleX(0.8297);'>d7425</span><span class=t style='left:9.5px;top:469.00px;font-size:13px;line-height:13px;color:#000;transform:scaleX(0.8296);'>08:46</span><span class=t style='left:36.5px;top:469.00px;font-size:13px;line-height:13px;color:#000;transform:scaleX(0.8298);'>:45.0</span><span class=t style='left:60.5px;top:469.00px;font-size:13px;line-height:13px;color:#000;transform:scaleX(0.8294);'>32</span><span class=t style='left:75.5px;top:469.00px;font-size:13px;line-height:13px;color:#000;transform:scaleX(0.7549);'>&lt;-</span><span class=t style='left:87.5px;top:469.00px;font-size:13px;line-height:13px;color:#000;transform:scaleX(0.8304);'>T1RSi</span><span class=t style='left:117.5px;top:469.00px;font-size:13px;line-height:13px;color:#000;transform:scaleX(0.8297);'>d7425</span><span class=t style='left:147.5px;top:469.00px;font-size:13px;line-height:13px;color:#000;transform:scaleX(0.7905);'>rs+00</span><span class=t style='left:173.5px;top:469.00px;font-size:13px;line-height:13px;color:#000;transform:scaleX(0.8294);'>000</span><span class=t style='left:194.5px;top:469.00px;font-size:13px;line-height:13px;color:#000;transform:scaleX(0.8216);'>+0000</span><span class=t style='left:224.5px;top:469.00px;font-size:13px;line-height:13px;color:#000;transform:scaleX(0.8294);'>0</span><span class=t style='left:233.5px;top:469.00px;font-size:13px;line-height:13px;color:#000;transform:scaleX(0.8159);'>+00</span><span class=t style='left:9.5px;top:482.00px;font-size:13px;line-height:13px;color:#000;transform:scaleX(0.8296);'>08:46</span><span class=t style='left:36.5px;top:482.00px;font-size:13px;line-height:13px;color:#000;transform:scaleX(0.8298);'>:45.0</span><span class=t style='left:60.5px;top:482.00px;font-size:13px;line-height:13px;color:#000;transform:scaleX(0.8294);'>32</span><span class=t style='left:75.5px;top:482.00px;font-size:13px;line-height:13px;color:#000;transform:scaleX(0.7549);'>-&gt;</span><span class=t style='left:87.5px;top:482.00px;font-size:13px;line-height:13px;color:#000;transform:scaleX(0.8360);'>T1RLi</span><span class=t style='left:116.5px;top:482.00px;font-size:13px;line-height:13px;color:#000;transform:scaleX(0.8297);'>d7425</span><span class=t style='left:9.5px;top:495.00px;font-size:13px;line-height:13px;color:#000;transform:scaleX(0.8296);'>08:46</span><span class=t style='left:36.5px;top:495.00px;font-size:13px;line-height:13px;color:#000;transform:scaleX(0.8298);'>:45.0</span><span class=t style='left:60.5px;top:495.00px;font-size:13px;line-height:13px;color:#000;transform:scaleX(0.8294);'>48</span><span class=t style='left:75.5px;top:495.00px;font-size:13px;line-height:13px;color:#000;transform:scaleX(0.7549);'>&lt;-</span><span class=t style='left:87.5px;top:495.00px;font-size:13px;line-height:13px;color:#000;transform:scaleX(0.8360);'>T1RLi</span><span class=t style='left:116.5px;top:495.00px;font-size:13px;line-height:13px;color:#000;transform:scaleX(0.8297);'>d7425</span><span class=t style='left:146.5px;top:495.00px;font-size:13px;line-height:13px;color:#000;transform:scaleX(0.7855);'>rl+00</span><span class=t style='left:169.5px;top:495.00px;font-size:13px;line-height:13px;color:#000;transform:scaleX(0.8294);'>0</span><span class=t style='left:9.5px;top:508.00px;font-size:13px;line-height:13px;color:#000;transform:scaleX(0.8296);'>08:46</span><span class=t style='left:36.5px;top:508.00px;font-size:13px;line-height:13px;color:#000;transform:scaleX(0.8298);'>:45.0</span><span class=t style='left:60.5px;top:508.00px;font-size:13px;line-height:13px;color:#000;transform:scaleX(0.8294);'>48</span><span class=t style='left:75.5px;top:508.00px;font-size:13px;line-height:13px;color:#000;transform:scaleX(0.7549);'>-&gt;</span><span class=t style='left:87.5px;top:508.00px;font-size:13px;line-height:13px;color:#000;transform:scaleX(0.8653);'>T1RTi</span><span class=t style='left:117.5px;top:508.00px;font-size:13px;line-height:13px;color:#000;transform:scaleX(0.8297);'>d7425</span><span class=t style='left:9.5px;top:521.00px;font-size:13px;line-height:13px;color:#fff;transform:scaleX(0.8296);'>08:46</span><span class=t style='left:36.5px;top:521.00px;font-size:13px;line-height:13px;color:#fff;transform:scaleX(0.8298);'>:45.0</span><span class=t style='left:60.5px;top:521.00px;font-size:13px;line-height:13px;color:#fff;transform:scaleX(0.8294);'>48</span><span class=t style='left:75.5px;top:521.00px;font-size:13px;line-height:13px;color:#fff;transform:scaleX(0.7549);'>&lt;-</span><span class=t style='left:87.5px;top:521.00px;font-size:13px;line-height:13px;color:#fff;transform:scaleX(0.8653);'>T1RTi</span><span class=t style='left:117.5px;top:521.00px;font-size:13px;line-height:13px;color:#fff;transform:scaleX(0.8297);'>d7425</span><span class=t style='left:147.5px;top:521.00px;font-size:13px;line-height:13px;color:#fff;transform:scaleX(0.8000);'>rt+02</span><span class=t style='left:171.5px;top:521.00px;font-size:13px;line-height:13px;color:#fff;transform:scaleX(0.8294);'>13</span><span class=t style='left:186.5px;top:521.00px;font-size:13px;line-height:13px;color:#fff;transform:scaleX(0.8216);'>+0214</span><span class=t style='left:1114.5px;top:261.00px;font-size:13px;line-height:13px;color:#000;transform:scaleX(0.8297);'>0750u</span><span class=t style='left:1144.5px;top:261.00px;font-size:13px;line-height:13px;color:#000;transform:scaleX(0.8173);'>i0100</span><span class=t style='left:1170.5px;top:261.00px;font-size:13px;line-height:13px;color:#000;transform:scaleX(0.8173);'>ul100</span><span class=t style='left:1196.5px;top:261.00px;font-size:13px;line-height:13px;color:#000;transform:scaleX(0.8297);'>0ue01</span><span class=t style='left:1226.5px;top:261.00px;font-size:13px;line-height:13px;color:#000;transform:scaleX(0.8294);'>50</span><span class=t style='left:1755.5px;top:261.00px;font-size:13px;line-height:13px;color:#000;transform:scaleX(0.8294);'>000</span><span class=t style='left:1776.5px;top:261.00px;font-size:13px;line-height:13px;color:#000;transform:scaleX(0.8294);'>700</span><span class=t style='left:1797.5px;top:261.00px;font-size:13px;line-height:13px;color:#000;transform:scaleX(0.8294);'>18</span><span class=t style='left:1812.5px;top:261.00px;font-size:13px;line-height:13px;color:#000;transform:scaleX(0.8297);'>2500a</span><span class=t style='left:1842.5px;top:261.00px;font-size:13px;line-height:13px;color:#000;transform:scaleX(0.8155);'>s100</span><span class=t style='left:1868.5px;top:261.00px;font-size:13px;line-height:13px;color:#000;transform:scaleX(0.8294);'>01</span><span class=t style='left:1883.5px;top:261.00px;font-size:13px;line-height:13px;color:#000;transform:scaleX(0.8298);'>0100</span><div class='a ' style='left:1899px;top:40px;width:1px;height:625px;background:#e3e3e3'></div><div class='a ' style='left:1900px;top:39px;width:1px;height:628px;background:#fff'></div><div class='a ' style='left:1901px;top:7px;width:1px;height:661px;background:#9a9a9a'></div><div class='a ' style='left:1902px;top:0px;width:6px;height:674px;background:linear-gradient(90deg,#b2b2b6,#cdcdd1 60%,#d4d4d8)'></div><div class='a ' style='left:1235px;top:164px;width:521px;height:364px;background:#fff;box-shadow:0 0 0 1px rgba(110,110,110,.5),0 3px 11px 1px rgba(0,0,0,.2)'></div><svg class=a style="left:1245px;top:170px" width="14" height="16" viewBox="0 0 14 16"><ellipse cx="3.600" cy="4.600" rx="2.400" ry="1.500" transform="rotate(-25 3.600 4.600)" fill="#1a1a1a"/><path d="M6 5.500l1 5" stroke="#8a6e10" stroke-width="1.600"/><path d="M7 1.500l2.500-.5.500 1.500 2-.5v2l-2 .5-1 2-2-.5z" fill="#f4e616"/><path d="M3.800 10.500l3-1.200 2.500 1v2.300l-2.500.7-3-.5z" fill="#f4e616"/><path d="M4.200 13.200h4.300v1.800H5z" fill="#222"/></svg><span class=t style='left:1264.0px;top:172.84px;font-size:12px;line-height:12px;color:#999;-webkit-text-stroke:0;transform:scaleX(0.9720);'>HAMILTON</span><span class=t style='left:1326.0px;top:172.84px;font-size:12px;line-height:12px;color:#999;-webkit-text-stroke:0;transform:scaleX(1.0362);'>Microlab</span><span class=t style='left:1375.7px;top:172.84px;font-size:12px;line-height:12px;color:#999;-webkit-text-stroke:0;transform:scaleX(0.8514);'>STAR</span><span class=t style='left:1404.7px;top:172.84px;font-size:12px;line-height:12px;color:#999;-webkit-text-stroke:0;transform:scaleX(0.9496);'>Service</span><span class=t style='left:1445.8px;top:172.84px;font-size:12px;line-height:12px;color:#999;-webkit-text-stroke:0;transform:scaleX(1.1750);'>-</span><span class=t style='left:1453.3px;top:172.84px;font-size:12px;line-height:12px;color:#999;-webkit-text-stroke:0;transform:scaleX(1.0599);'>[Main</span><span class=t style='left:1486.3px;top:172.84px;font-size:12px;line-height:12px;color:#999;-webkit-text-stroke:0;transform:scaleX(1.0886);'>window]</span><svg class=a style="left:1630px;top:168px" width="116" height="20" viewBox="0 0 116 20"><g stroke="#8e8e8e" stroke-width="1" fill="none"><path d="M7 10.500h10"/><rect x="52.500" y="5.500" width="9" height="9"/><path d="M98 5l10 10M108 5l-10 10"/></g></svg><span class=t style='left:1241.8px;top:197.84px;font-size:12px;line-height:12px;color:#6a6a6a;-webkit-text-stroke:0;transform:scaleX(0.9719);'>File</span><span class=t style='left:1274.0px;top:197.84px;font-size:12px;line-height:12px;color:#6a6a6a;-webkit-text-stroke:0;transform:scaleX(1.0339);'>Control</span><span class=t style='left:1327.8px;top:197.84px;font-size:12px;line-height:12px;color:#6a6a6a;-webkit-text-stroke:0;transform:scaleX(1.0347);'>Macro</span><span class=t style='left:1375.5px;top:197.84px;font-size:12px;line-height:12px;color:#6a6a6a;-webkit-text-stroke:0;transform:scaleX(1.0079);'>View</span><span class=t style='left:1414.7px;top:197.84px;font-size:12px;line-height:12px;color:#6a6a6a;-webkit-text-stroke:0;transform:scaleX(0.9986);'>Settings</span><span class=t style='left:1470.7px;top:197.84px;font-size:12px;line-height:12px;color:#6a6a6a;-webkit-text-stroke:0;transform:scaleX(1.0267);'>Download</span><span class=t style='left:1538.7px;top:197.84px;font-size:12px;line-height:12px;color:#6a6a6a;-webkit-text-stroke:0;transform:scaleX(0.9190);'>Traces</span><span class=t style='left:1585.3px;top:197.84px;font-size:12px;line-height:12px;color:#6a6a6a;-webkit-text-stroke:0;transform:scaleX(0.9709);'>Tools</span><span class=t style='left:1625.7px;top:197.84px;font-size:12px;line-height:12px;color:#6a6a6a;-webkit-text-stroke:0;transform:scaleX(1.0370);'>Help</span><div class='a ' style='left:1235px;top:214px;width:521px;height:314px;background:#c0c0c0;box-shadow:inset 1px 1px 0 #a0a0a0,inset 2px 2px 0 #696969,inset -1px -1px 0 #fff,inset -2px -2px 0 #e3e3e3'></div><div class='a ' style='left:1242px;top:221px;width:157px;height:37px;background:#f0f0f0;box-shadow:inset 0 0 0 1px #646464,inset 2px 2px 0 #fff,inset -2px -2px 0 #696969,inset -3px -3px 0 #a0a0a0'></div><span class=t style='left:1305.0px;top:232.30px;font-size:13px;line-height:13px;color:#000;transform:scaleX(0.8116);'>(none)</span><div class='a ' style='left:1405px;top:221px;width:157px;height:37px;background:#f0f0f0;box-shadow:inset -1px -1px 0 #696969,inset 1px 1px 0 #fff,inset -2px -2px 0 #a0a0a0'></div><span class=t style='left:1468.0px;top:232.30px;font-size:13px;line-height:13px;color:#000;transform:scaleX(0.8116);'>(none)</span><div class='a ' style='left:1567px;top:221px;width:157px;height:37px;background:#f0f0f0;box-shadow:inset -1px -1px 0 #696969,inset 1px 1px 0 #fff,inset -2px -2px 0 #a0a0a0'></div><span class=t style='left:1630.0px;top:232.30px;font-size:13px;line-height:13px;color:#000;transform:scaleX(0.8116);'>(none)</span><div class='a ' style='left:1242px;top:264px;width:157px;height:37px;background:#f0f0f0;box-shadow:inset -1px -1px 0 #696969,inset 1px 1px 0 #fff,inset -2px -2px 0 #a0a0a0'></div><span class=t style='left:1305.0px;top:275.30px;font-size:13px;line-height:13px;color:#000;transform:scaleX(0.8116);'>(none)</span><div class='a ' style='left:1405px;top:264px;width:157px;height:37px;background:#f0f0f0;box-shadow:inset -1px -1px 0 #696969,inset 1px 1px 0 #fff,inset -2px -2px 0 #a0a0a0'></div><span class=t style='left:1468.0px;top:275.30px;font-size:13px;line-height:13px;color:#000;transform:scaleX(0.8116);'>(none)</span><div class='a ' style='left:1567px;top:264px;width:157px;height:37px;background:#f0f0f0;box-shadow:inset -1px -1px 0 #696969,inset 1px 1px 0 #fff,inset -2px -2px 0 #a0a0a0'></div><span class=t style='left:1630.0px;top:275.30px;font-size:13px;line-height:13px;color:#000;transform:scaleX(0.8116);'>(none)</span><div class='a ' style='left:1242px;top:306px;width:157px;height:37px;background:#f0f0f0;box-shadow:inset -1px -1px 0 #696969,inset 1px 1px 0 #fff,inset -2px -2px 0 #a0a0a0'></div><span class=t style='left:1305.0px;top:317.30px;font-size:13px;line-height:13px;color:#000;transform:scaleX(0.8116);'>(none)</span><div class='a ' style='left:1405px;top:306px;width:157px;height:37px;background:#f0f0f0;box-shadow:inset -1px -1px 0 #696969,inset 1px 1px 0 #fff,inset -2px -2px 0 #a0a0a0'></div><span class=t style='left:1468.0px;top:317.30px;font-size:13px;line-height:13px;color:#000;transform:scaleX(0.8116);'>(none)</span><div class='a ' style='left:1567px;top:306px;width:157px;height:37px;background:#f0f0f0;box-shadow:inset -1px -1px 0 #696969,inset 1px 1px 0 #fff,inset -2px -2px 0 #a0a0a0'></div><span class=t style='left:1630.0px;top:317.30px;font-size:13px;line-height:13px;color:#000;transform:scaleX(0.8116);'>(none)</span><div class='a ' style='left:1242px;top:348px;width:157px;height:37px;background:#f0f0f0;box-shadow:inset -1px -1px 0 #696969,inset 1px 1px 0 #fff,inset -2px -2px 0 #a0a0a0'></div><span class=t style='left:1305.0px;top:359.30px;font-size:13px;line-height:13px;color:#000;transform:scaleX(0.8116);'>(none)</span><div class='a ' style='left:1405px;top:348px;width:157px;height:37px;background:#f0f0f0;box-shadow:inset -1px -1px 0 #696969,inset 1px 1px 0 #fff,inset -2px -2px 0 #a0a0a0'></div><span class=t style='left:1468.0px;top:359.30px;font-size:13px;line-height:13px;color:#000;transform:scaleX(0.8116);'>(none)</span><div class='a ' style='left:1567px;top:348px;width:157px;height:37px;background:#f0f0f0;box-shadow:inset -1px -1px 0 #696969,inset 1px 1px 0 #fff,inset -2px -2px 0 #a0a0a0'></div><span class=t style='left:1630.0px;top:359.30px;font-size:13px;line-height:13px;color:#000;transform:scaleX(0.8116);'>(none)</span><div class='a ' style='left:1242px;top:391px;width:157px;height:37px;background:#f0f0f0;box-shadow:inset -1px -1px 0 #696969,inset 1px 1px 0 #fff,inset -2px -2px 0 #a0a0a0'></div><span class=t style='left:1305.0px;top:402.30px;font-size:13px;line-height:13px;color:#000;transform:scaleX(0.8116);'>(none)</span><div class='a ' style='left:1405px;top:391px;width:157px;height:37px;background:#f0f0f0;box-shadow:inset -1px -1px 0 #696969,inset 1px 1px 0 #fff,inset -2px -2px 0 #a0a0a0'></div><span class=t style='left:1468.0px;top:402.30px;font-size:13px;line-height:13px;color:#000;transform:scaleX(0.8116);'>(none)</span><div class='a ' style='left:1567px;top:391px;width:157px;height:37px;background:#f0f0f0;box-shadow:inset -1px -1px 0 #696969,inset 1px 1px 0 #fff,inset -2px -2px 0 #a0a0a0'></div><span class=t style='left:1630.0px;top:402.30px;font-size:13px;line-height:13px;color:#000;transform:scaleX(0.8116);'>(none)</span><div class='a ' style='left:1242px;top:433px;width:157px;height:37px;background:#f0f0f0;box-shadow:inset -1px -1px 0 #696969,inset 1px 1px 0 #fff,inset -2px -2px 0 #a0a0a0'></div><span class=t style='left:1305.0px;top:444.30px;font-size:13px;line-height:13px;color:#000;transform:scaleX(0.8116);'>(none)</span><div class='a ' style='left:1405px;top:433px;width:157px;height:37px;background:#f0f0f0;box-shadow:inset -1px -1px 0 #696969,inset 1px 1px 0 #fff,inset -2px -2px 0 #a0a0a0'></div><span class=t style='left:1468.0px;top:444.30px;font-size:13px;line-height:13px;color:#000;transform:scaleX(0.8116);'>(none)</span><div class='a ' style='left:1567px;top:433px;width:157px;height:37px;background:#f0f0f0;box-shadow:inset -1px -1px 0 #696969,inset 1px 1px 0 #fff,inset -2px -2px 0 #a0a0a0'></div><span class=t style='left:1630.0px;top:444.30px;font-size:13px;line-height:13px;color:#000;transform:scaleX(0.8116);'>(none)</span><div class='a ' style='left:1242px;top:475px;width:157px;height:37px;background:#f0f0f0;box-shadow:inset -1px -1px 0 #696969,inset 1px 1px 0 #fff,inset -2px -2px 0 #a0a0a0'></div><span class=t style='left:1305.0px;top:486.30px;font-size:13px;line-height:13px;color:#000;transform:scaleX(0.8116);'>(none)</span><div class='a ' style='left:1405px;top:475px;width:157px;height:37px;background:#f0f0f0;box-shadow:inset -1px -1px 0 #696969,inset 1px 1px 0 #fff,inset -2px -2px 0 #a0a0a0'></div><span class=t style='left:1468.0px;top:486.30px;font-size:13px;line-height:13px;color:#000;transform:scaleX(0.8116);'>(none)</span><div class='a ' style='left:1567px;top:475px;width:157px;height:37px;background:#f0f0f0;box-shadow:inset -1px -1px 0 #696969,inset 1px 1px 0 #fff,inset -2px -2px 0 #a0a0a0'></div><span class=t style='left:1630.0px;top:486.30px;font-size:13px;line-height:13px;color:#000;transform:scaleX(0.8116);'>(none)</span><div class='a ' style='left:1242px;top:518px;width:157px;height:10px;background:#f0f0f0;box-shadow:inset -1px 0 0 #696969,inset 1px 1px 0 #fff,inset -2px 0 0 #a0a0a0'></div><div class='a ' style='left:1405px;top:518px;width:157px;height:10px;background:#f0f0f0;box-shadow:inset -1px 0 0 #696969,inset 1px 1px 0 #fff,inset -2px 0 0 #a0a0a0'></div><div class='a ' style='left:1567px;top:518px;width:157px;height:10px;background:#f0f0f0;box-shadow:inset -1px 0 0 #696969,inset 1px 1px 0 #fff,inset -2px 0 0 #a0a0a0'></div><div class='a ' style='left:1235px;top:526px;width:521px;height:2px;background:#f4f4f4'></div><div class='a ' style='left:587px;top:65px;width:531px;height:586px;background:#f0f0f0;box-shadow:inset 0 0 0 1px #6f6f6f,0 4px 14px 1px rgba(0,0,0,.23)'></div><div class='a ' style='left:588px;top:66px;width:529px;height:25px;background:#fff'></div><span class=t style='left:591.0px;top:71.84px;font-size:12px;line-height:12px;color:#000;-webkit-text-stroke:0;transform:scaleX(0.9499);'>Heater Shaker</span><svg class=a style="left:1096px;top:72px" width="12" height="12" viewBox="0 0 12 12"><path d="M1 1l10 10M11 1L1 11" stroke="#000" stroke-width="1.100" fill="none"/></svg><div class='a ' style='left:596px;top:105px;width:200px;height:58px;box-shadow:inset 0 0 0 1px #a0a0a0,inset 0 0 0 2px #fdfdfd'></div><div class='a ' style='left:597px;top:163px;width:200px;height:1px;background:#fff'></div><div class='a ' style='left:796px;top:106px;width:1px;height:58px;background:#fff'></div><span class=t style='left:604.0px;top:123.00px;font-size:13px;line-height:13px;color:#000;transform:scaleX(0.8324);'>Connected via :</span><svg class=a style="left:705px;top:115px" width="12" height="12" viewBox="0 0 12 12"><circle cx="6" cy="6" r="5" fill="#fff"/><g fill="none" stroke-width="1"><path d="M2.110 9.890A5.500 5.500 0 0 1 9.890 2.110" stroke="#a0a0a0"/><path d="M9.890 2.110A5.500 5.500 0 0 1 2.110 9.890" stroke="#fff"/><path d="M2.820 9.180A4.500 4.500 0 0 1 9.180 2.820" stroke="#696969"/><path d="M9.180 2.820A4.500 4.500 0 0 1 2.820 9.180" stroke="#e3e3e3"/></g><circle cx="6" cy="6" r="2" fill="#000"/></svg><svg class=a style="left:705px;top:139px" width="12" height="12" viewBox="0 0 12 12"><circle cx="6" cy="6" r="5" fill="#fff"/><g fill="none" stroke-width="1"><path d="M2.110 9.890A5.500 5.500 0 0 1 9.890 2.110" stroke="#a0a0a0"/><path d="M9.890 2.110A5.500 5.500 0 0 1 2.110 9.890" stroke="#fff"/><path d="M2.820 9.180A4.500 4.500 0 0 1 9.180 2.820" stroke="#696969"/><path d="M9.180 2.820A4.500 4.500 0 0 1 2.820 9.180" stroke="#e3e3e3"/></g></svg><span class=t style='left:722.2px;top:114.00px;font-size:13px;line-height:13px;color:#000;transform:scaleX(0.8512);'>STAR</span><span class=t style='left:722.2px;top:138.00px;font-size:13px;line-height:13px;color:#000;transform:scaleX(0.8154);'>USB</span><span class=t style='left:804.0px;top:111.00px;font-size:13px;line-height:13px;color:#000;transform:scaleX(0.8187);'>Heater Shaker Address:</span><div class='a ' style='left:952px;top:107px;width:100px;height:21px;background:#fff;box-shadow:inset 1px 1px 0 #a0a0a0,inset -1px -1px 0 #fff,inset 2px 2px 0 #696969,inset -2px -2px 0 #e3e3e3'></div><span class=t style='left:955.5px;top:110.00px;font-size:13px;line-height:13px;color:#000;transform:scaleX(0.7580);'>T1</span><div class='a ' style='left:1034px;top:109px;width:16px;height:17px;background:#f0f0f0;box-shadow:inset -1px -1px 0 #696969,inset 1px 1px 0 #e3e3e3,inset -2px -2px 0 #a0a0a0,inset 2px 2px 0 #fff'></div><svg class=a style="left:1038px;top:116px" width="8" height="5" viewBox="0 0 8 5"><path d="M0.500 0h7L4 4z" fill="#000"/></svg><span class=t style='left:607.7px;top:187.00px;font-size:13px;line-height:13px;color:#000;transform:scaleX(0.7948);'>Firmware version:</span><div class='a ' style='left:724px;top:187px;width:204px;height:16px;background:#f0f0f0;box-shadow:inset 1px 1px 0 #a0a0a0,inset -1px -1px 0 #fff,inset 2px 2px 0 #696969,inset -2px -2px 0 #e3e3e3'></div><span class=t style='left:726.5px;top:189.00px;font-size:13px;line-height:13px;color:#000;transform:scaleX(0.8180);'>3.2S e 2015-08-17 (Heater Shaker)</span><div class='a ' style='left:604px;top:213px;width:496px;height:141px;box-shadow:inset 0 0 0 1px #a0a0a0,inset 0 0 0 2px #fdfdfd'></div><div class='a ' style='left:605px;top:354px;width:496px;height:1px;background:#fff'></div><div class='a ' style='left:1100px;top:214px;width:1px;height:141px;background:#fff'></div><div class='a ' style='left:611px;top:208px;width:35px;height:12px;background:#f0f0f0'></div><span class=t style='left:612.8px;top:207.00px;font-size:13px;line-height:13px;color:#000;transform:scaleX(0.8410);'>Status</span><div class='a ' style='left:612px;top:223px;width:12px;height:16px;background:#f0f0f0;box-shadow:inset 1px 1px 0 #a0a0a0,inset -1px -1px 0 #fff,inset 2px 2px 0 #696969,inset -2px -2px 0 #e3e3e3'></div><span class=t style='left:614.3px;top:225.00px;font-size:13px;line-height:13px;color:#000;transform:scaleX(0.8570);'>0</span><span class=t style='left:628.3px;top:227.00px;font-size:13px;line-height:13px;color:#000;transform:scaleX(0.8099);'>Parallelity level 0</span><div class='a ' style='left:852px;top:223px;width:12px;height:16px;background:#f0f0f0;box-shadow:inset 1px 1px 0 #a0a0a0,inset -1px -1px 0 #fff,inset 2px 2px 0 #696969,inset -2px -2px 0 #e3e3e3'></div><span class=t style='left:854.3px;top:226.00px;font-size:13px;line-height:13px;color:#000;transform:scaleX(0.8570);'>0</span><span class=t style='left:867.9px;top:223.00px;font-size:13px;line-height:13px;color:#000;transform:scaleX(0.8133);'>Download FLASH EPROM error</span><div class='a ' style='left:612px;top:239px;width:12px;height:16px;background:#f0f0f0;box-shadow:inset 1px 1px 0 #a0a0a0,inset -1px -1px 0 #fff,inset 2px 2px 0 #696969,inset -2px -2px 0 #e3e3e3'></div><span class=t style='left:614.3px;top:241.00px;font-size:13px;line-height:13px;color:#000;transform:scaleX(0.8570);'>0</span><span class=t style='left:628.3px;top:243.00px;font-size:13px;line-height:13px;color:#000;transform:scaleX(0.8099);'>Parallelity level 1</span><div class='a ' style='left:852px;top:239px;width:12px;height:16px;background:#f0f0f0;box-shadow:inset 1px 1px 0 #a0a0a0,inset -1px -1px 0 #fff,inset 2px 2px 0 #696969,inset -2px -2px 0 #e3e3e3'></div><span class=t style='left:854.3px;top:242.00px;font-size:13px;line-height:13px;color:#000;transform:scaleX(0.8570);'>0</span><span class=t style='left:867.9px;top:239.00px;font-size:13px;line-height:13px;color:#000;transform:scaleX(0.8156);'>FLASH EPROM checksum error</span><div class='a ' style='left:612px;top:255px;width:12px;height:16px;background:#f0f0f0;box-shadow:inset 1px 1px 0 #a0a0a0,inset -1px -1px 0 #fff,inset 2px 2px 0 #696969,inset -2px -2px 0 #e3e3e3'></div><span class=t style='left:614.3px;top:257.00px;font-size:13px;line-height:13px;color:#000;transform:scaleX(0.8570);'>0</span><span class=t style='left:628.3px;top:259.00px;font-size:13px;line-height:13px;color:#000;transform:scaleX(0.8099);'>Parallelity level 2</span><div class='a ' style='left:852px;top:255px;width:12px;height:16px;background:#f0f0f0;box-shadow:inset 1px 1px 0 #a0a0a0,inset -1px -1px 0 #fff,inset 2px 2px 0 #696969,inset -2px -2px 0 #e3e3e3'></div><span class=t style='left:854.3px;top:258.00px;font-size:13px;line-height:13px;color:#000;transform:scaleX(0.8570);'>0</span><span class=t style='left:867.9px;top:255.00px;font-size:13px;line-height:13px;color:#000;transform:scaleX(0.8046);'>RAM test error</span><div class='a ' style='left:612px;top:271px;width:12px;height:16px;background:#f0f0f0;box-shadow:inset 1px 1px 0 #a0a0a0,inset -1px -1px 0 #fff,inset 2px 2px 0 #696969,inset -2px -2px 0 #e3e3e3'></div><span class=t style='left:614.3px;top:273.00px;font-size:13px;line-height:13px;color:#000;transform:scaleX(0.8570);'>0</span><span class=t style='left:628.3px;top:275.00px;font-size:13px;line-height:13px;color:#000;transform:scaleX(0.8196);'>Download mode</span><div class='a ' style='left:852px;top:271px;width:12px;height:16px;background:#f0f0f0;box-shadow:inset 1px 1px 0 #a0a0a0,inset -1px -1px 0 #fff,inset 2px 2px 0 #696969,inset -2px -2px 0 #e3e3e3'></div><span class=t style='left:854.3px;top:274.00px;font-size:13px;line-height:13px;color:#000;transform:scaleX(0.8570);'>0</span><span class=t style='left:867.9px;top:271.00px;font-size:13px;line-height:13px;color:#000;transform:scaleX(0.8158);'>EEPROM checksum error</span><div class='a ' style='left:612px;top:287px;width:12px;height:16px;background:#f0f0f0;box-shadow:inset 1px 1px 0 #a0a0a0,inset -1px -1px 0 #fff,inset 2px 2px 0 #696969,inset -2px -2px 0 #e3e3e3'></div><span class=t style='left:614.3px;top:289.00px;font-size:13px;line-height:13px;color:#000;transform:scaleX(0.8570);'>0</span><span class=t style='left:628.3px;top:291.00px;font-size:13px;line-height:13px;color:#000;transform:scaleX(0.8224);'>Stop</span><div class='a ' style='left:852px;top:287px;width:12px;height:16px;background:#f0f0f0;box-shadow:inset 1px 1px 0 #a0a0a0,inset -1px -1px 0 #fff,inset 2px 2px 0 #696969,inset -2px -2px 0 #e3e3e3'></div><span class=t style='left:854.3px;top:290.00px;font-size:13px;line-height:13px;color:#000;transform:scaleX(0.8570);'>0</span><span class=t style='left:867.9px;top:287.00px;font-size:13px;line-height:13px;color:#000;transform:scaleX(0.8069);'>EEPROM communication error</span><div class='a ' style='left:612px;top:303px;width:12px;height:16px;background:#f0f0f0;box-shadow:inset 1px 1px 0 #a0a0a0,inset -1px -1px 0 #fff,inset 2px 2px 0 #696969,inset -2px -2px 0 #e3e3e3'></div><span class=t style='left:614.3px;top:305.00px;font-size:13px;line-height:13px;color:#000;transform:scaleX(0.8570);'>0</span><span class=t style='left:628.3px;top:307.00px;font-size:13px;line-height:13px;color:#000;transform:scaleX(0.8063);'>Single step mode</span><div class='a ' style='left:852px;top:303px;width:12px;height:16px;background:#f0f0f0;box-shadow:inset 1px 1px 0 #a0a0a0,inset -1px -1px 0 #fff,inset 2px 2px 0 #696969,inset -2px -2px 0 #e3e3e3'></div><span class=t style='left:854.3px;top:306.00px;font-size:13px;line-height:13px;color:#000;transform:scaleX(0.8570);'>0</span><span class=t style='left:867.9px;top:303.00px;font-size:13px;line-height:13px;color:#000;transform:scaleX(0.8323);'>Wrong FW loaded</span><div class='a ' style='left:612px;top:319px;width:12px;height:16px;background:#f0f0f0;box-shadow:inset 1px 1px 0 #a0a0a0,inset -1px -1px 0 #fff,inset 2px 2px 0 #696969,inset -2px -2px 0 #e3e3e3'></div><span class=t style='left:614.3px;top:321.00px;font-size:13px;line-height:13px;color:#000;transform:scaleX(0.8570);'>0</span><span class=t style='left:628.3px;top:323.00px;font-size:13px;line-height:13px;color:#000;transform:scaleX(0.8336);'>Test mode</span><div class='a ' style='left:852px;top:319px;width:12px;height:16px;background:#f0f0f0;box-shadow:inset 1px 1px 0 #a0a0a0,inset -1px -1px 0 #fff,inset 2px 2px 0 #696969,inset -2px -2px 0 #e3e3e3'></div><span class=t style='left:854.3px;top:322.00px;font-size:13px;line-height:13px;color:#000;transform:scaleX(0.8570);'>0</span><span class=t style='left:867.9px;top:319.00px;font-size:13px;line-height:13px;color:#000;transform:scaleX(0.8262);'>Not used</span><div class='a ' style='left:612px;top:335px;width:12px;height:16px;background:#f0f0f0;box-shadow:inset 1px 1px 0 #a0a0a0,inset -1px -1px 0 #fff,inset 2px 2px 0 #696969,inset -2px -2px 0 #e3e3e3'></div><span class=t style='left:614.3px;top:337.00px;font-size:13px;line-height:13px;color:#000;transform:scaleX(0.8570);'>0</span><span class=t style='left:628.3px;top:339.00px;font-size:13px;line-height:13px;color:#000;transform:scaleX(0.8262);'>Not used</span><div class='a ' style='left:852px;top:335px;width:12px;height:16px;background:#f0f0f0;box-shadow:inset 1px 1px 0 #a0a0a0,inset -1px -1px 0 #fff,inset 2px 2px 0 #696969,inset -2px -2px 0 #e3e3e3'></div><span class=t style='left:854.3px;top:338.00px;font-size:13px;line-height:13px;color:#000;transform:scaleX(0.8570);'>0</span><span class=t style='left:867.9px;top:335.00px;font-size:13px;line-height:13px;color:#000;transform:scaleX(0.8144);'>CAN node name not set</span><span class=t style='left:684.7px;top:367.00px;font-size:13px;line-height:13px;color:#000;transform:scaleX(0.8327);'>Voltage 3.3V:</span><div class='a ' style='left:752px;top:367px;width:80px;height:16px;background:#f0f0f0;box-shadow:inset 1px 1px 0 #a0a0a0,inset -1px -1px 0 #fff,inset 2px 2px 0 #696969,inset -2px -2px 0 #e3e3e3'></div><span class=t style='left:754.2px;top:369.00px;font-size:13px;line-height:13px;color:#000;transform:scaleX(0.8334);'>3.3 V</span><span class=t style='left:955.5px;top:367.00px;font-size:13px;line-height:13px;color:#000;transform:scaleX(0.8382);'>Voltage 41V:</span><div class='a ' style='left:1020px;top:367px;width:80px;height:16px;background:#f0f0f0;box-shadow:inset 1px 1px 0 #a0a0a0,inset -1px -1px 0 #fff,inset 2px 2px 0 #696969,inset -2px -2px 0 #e3e3e3'></div><span class=t style='left:1022.5px;top:369.00px;font-size:13px;line-height:13px;color:#000;transform:scaleX(0.8246);'>41.4 V</span><div class='a ' style='left:600px;top:415px;width:505px;height:189px;box-shadow:inset -1px 0 0 #696969,inset 0 -1px 0 #696969,inset -3px 0 0 #a0a0a0,inset 0 -2px 0 #a0a0a0,inset 1px 0 0 #696969,inset 2px 0 0 #fff'></div><svg class=a style="left:600px;top:394px" width="506" height="24" viewBox="0 0 506 24"><g fill="none" stroke-width="1">
<path d="M1 22.500H336.500" stroke="#fff"/><path d="M0 21.500H337" stroke="#696969"/>
<path d="M4 2.500H165M172 2.500H333M340 2.500H501M1.500 6V21M337.500 6V23" stroke="#fff"/>
<path d="M167.500 6V21M335.500 6V21M502.500 6V24M503.500 6V24" stroke="#a0a0a0"/>
<path d="M0.500 21.500V5.500L4.500 1.500H164.500L168.500 5.500V21.500M168.500 5.500L172.500 1.500H332.500L336.500 5.500V21.500M336.500 5.500L340.500 1.500H500.500L504.500 5.500V24" stroke="#696969"/>
</g></svg><span class=t style='left:654.1px;top:399.00px;font-size:13px;line-height:13px;color:#000;transform:scaleX(0.8239);'>Shaker-Drive</span><span class=t style='left:816.8px;top:399.00px;font-size:13px;line-height:13px;color:#000;transform:scaleX(0.8338);'>Plate lock-Drive</span><div class='a ' style='left:963px;top:399px;width:118px;height:15px;border:1px dotted #000;box-sizing:border-box'></div><span class=t style='left:965.5px;top:400.00px;font-size:13px;line-height:13px;color:#000;font-weight:bold;transform:scaleX(0.9090);-webkit-text-stroke:0.35px #000;'>Temperature Control</span><div class='a ' style='left:612px;top:427px;width:165px;height:33px;background:#f0f0f0;box-shadow:inset -1px -1px 0 #696969,inset 1px 1px 0 #fff,inset -2px -2px 0 #a0a0a0'></div><span class=t style='left:628.8px;top:436.00px;font-size:13px;line-height:13px;color:#000;transform:scaleX(0.8108);'>Start temperature controller</span><div class='a ' style='left:612px;top:471px;width:165px;height:33px;background:#f0f0f0;box-shadow:inset -1px -1px 0 #696969,inset 1px 1px 0 #fff,inset -2px -2px 0 #a0a0a0'></div><span class=t style='left:628.8px;top:480.00px;font-size:13px;line-height:13px;color:#000;transform:scaleX(0.8144);'>Stop temperature controller</span><span class=t style='left:825.5px;top:431.00px;font-size:13px;line-height:13px;color:#000;transform:scaleX(0.8106);'>Actual temperature sensor 1:</span><span class=t style='left:825.5px;top:455.00px;font-size:13px;line-height:13px;color:#000;transform:scaleX(0.8106);'>Actual temperature sensor 2:</span><div class='a ' style='left:964px;top:431px;width:116px;height:20px;background:#f0f0f0;box-shadow:inset 1px 1px 0 #a0a0a0,inset -1px -1px 0 #fff,inset 2px 2px 0 #696969,inset -2px -2px 0 #e3e3e3'></div><span class=t style='left:966.3px;top:433.00px;font-size:13px;line-height:13px;color:#000;transform:scaleX(0.8325);'>+0213</span><div class='a ' style='left:964px;top:455px;width:116px;height:20px;background:#f0f0f0;box-shadow:inset 1px 1px 0 #a0a0a0,inset -1px -1px 0 #fff,inset 2px 2px 0 #696969,inset -2px -2px 0 #e3e3e3'></div><span class=t style='left:966.3px;top:457.00px;font-size:13px;line-height:13px;color:#000;transform:scaleX(0.8325);'>+0214</span><span class=t style='left:858.4px;top:487.00px;font-size:13px;line-height:13px;color:#000;transform:scaleX(0.8243);'>Target temperature [1/10 °C]:</span><div class='a ' style='left:1000px;top:487px;width:92px;height:20px;background:#fff;box-shadow:inset 1px 1px 0 #a0a0a0,inset -1px -1px 0 #fff,inset 2px 2px 0 #696969,inset -2px -2px 0 #e3e3e3'></div><span class=t style='left:1002.9px;top:490.00px;font-size:13px;line-height:13px;color:#000;transform:scaleX(0.8294);'>250</span><span class=t style='left:756.2px;top:511.00px;font-size:13px;line-height:13px;color:#000;transform:scaleX(0.8053);'>Timeout until starting of temperature supervision [s]:</span><div class='a ' style='left:1000px;top:511px;width:92px;height:20px;background:#fff;box-shadow:inset 1px 1px 0 #a0a0a0,inset -1px -1px 0 #fff,inset 2px 2px 0 #696969,inset -2px -2px 0 #e3e3e3'></div><span class=t style='left:1002.9px;top:514.00px;font-size:13px;line-height:13px;color:#000;transform:scaleX(0.8298);'>1800</span><span class=t style='left:770.5px;top:535.00px;font-size:13px;line-height:13px;color:#000;transform:scaleX(0.8191);'>Tolerance for temperature supervision [1/10 °C]:</span><div class='a ' style='left:1000px;top:535px;width:92px;height:20px;background:#fff;box-shadow:inset 1px 1px 0 #a0a0a0,inset -1px -1px 0 #fff,inset 2px 2px 0 #696969,inset -2px -2px 0 #e3e3e3'></div><span class=t style='left:1002.9px;top:538.00px;font-size:13px;line-height:13px;color:#000;transform:scaleX(0.8294);'>20</span><span class=t style='left:732.7px;top:559.00px;font-size:13px;line-height:13px;color:#000;transform:scaleX(0.8152);'>Security tolerance for temperature supervision [1/10 °C]:</span><div class='a ' style='left:1000px;top:559px;width:92px;height:20px;background:#fff;box-shadow:inset 1px 1px 0 #a0a0a0,inset -1px -1px 0 #fff,inset 2px 2px 0 #696969,inset -2px -2px 0 #e3e3e3'></div><span class=t style='left:1002.9px;top:562.00px;font-size:13px;line-height:13px;color:#000;transform:scaleX(0.8294);'>60</span><div class='a ' style='left:600px;top:617px;width:13px;height:13px;background:#fff;box-shadow:inset 1px 1px 0 #a0a0a0,inset -1px -1px 0 #fff,inset 2px 2px 0 #696969,inset -2px -2px 0 #e3e3e3'></div><span class=t style='left:617.5px;top:616.00px;font-size:13px;line-height:13px;color:#000;transform:scaleX(0.8227);'>Automatic request</span></div></body></html>
